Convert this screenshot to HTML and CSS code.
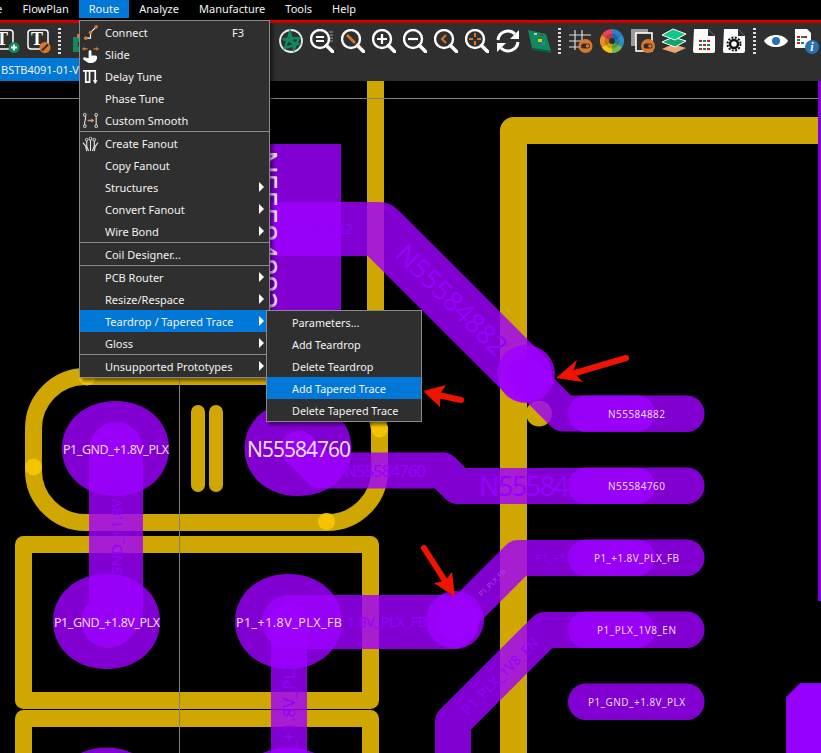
FILE: index.html
```html
<!DOCTYPE html>
<html lang="en">

<head>
    <meta charset="UTF-8">
    <title>Route menu</title>
    <link rel="stylesheet" href="styles.css">
</head>

<body>
    <div class="app">
        <div class="menubar">
            <span class="menubar-cut">e</span>
            <span class="menubar-item">FlowPlan</span>
            <span class="menubar-item active">Route</span>
            <span class="menubar-item">Analyze</span>
            <span class="menubar-item">Manufacture</span>
            <span class="menubar-item">Tools</span>
            <span class="menubar-item">Help</span>
        </div>
        <div class="accent"></div>

        <!-- toolbar -->
        <div class="toolbar">
            <span class="tool"><svg viewBox="0 0 24 24"><rect x="-5" y="1" width="22" height="19" rx="3" class="ic-box"/><text x="6" y="16" class="ic-t">T</text><circle cx="18" cy="18.500" r="5.500" fill="#0f8a5f"/><path d="M18 15.500v6M15 18.500h6" stroke="#fff" stroke-width="1.800"/></svg></span>
            <span class="tool"><svg viewBox="0 0 24 24"><rect x="1" y="1" width="20" height="19" rx="3" class="ic-box"/><text x="10" y="16" class="ic-t">T</text><circle cx="18" cy="18.500" r="5.500" fill="#d9782d"/><path d="M15 21.500l6-6" stroke="#3a2a1a" stroke-width="2"/></svg></span>
            <span class="tool-sep"></span>
            <span class="tool"><svg viewBox="0 0 24 24"><path d="M4 8h20v15H4z" fill="#0f8a5f"/><rect x="8" y="5" width="4" height="4" fill="#d9782d"/><rect x="9" y="13" width="5" height="5" fill="#2f2f2f"/></svg></span>
            <span class="tool-spacer"></span>
            <span class="tool"><svg viewBox="0 0 24 24"><circle cx="12" cy="12" r="11" fill="#2f2f2f" stroke="#e4f0ea" stroke-width="1.800"/><path d="M11 3L6 19l13-4L4 10l16-1-5 11z" fill="none" stroke="#0f8a5f" stroke-width="2.400"/></svg></span>
            <span class="tool"><svg viewBox="0 0 24 24"><use href="#lens"/><path d="M6 8h8M6 12h8" stroke="#fff" stroke-width="2"/><path d="M19 3h4M20 6h3M20 9h3M20 12h3" stroke="#999" stroke-width="1"/></svg></span>
            <span class="tool"><svg viewBox="0 0 24 24"><use href="#lens"/><path d="M6 6l8 8" stroke="#d9782d" stroke-width="2.600"/></svg></span>
            <span class="tool"><svg viewBox="0 0 24 24"><use href="#lens"/><path d="M5 10h10M10 5v10" stroke="#fff" stroke-width="2.200"/></svg></span>
            <span class="tool"><svg viewBox="0 0 24 24"><use href="#lens"/><path d="M5 10h10" stroke="#fff" stroke-width="2.200"/></svg></span>
            <span class="tool"><svg viewBox="0 0 24 24"><use href="#lens"/><path d="M12 6l-4 4 4 4" fill="none" stroke="#d9782d" stroke-width="2"/></svg></span>
            <span class="tool"><svg viewBox="0 0 24 24"><use href="#lens"/><path d="M4 10h4M12 10h4M10 4v4M10 12v4" stroke="#d9782d" stroke-width="2"/></svg></span>
            <span class="tool"><svg viewBox="0 0 24 24"><path d="M2 11a10 10 0 0 1 17-6" fill="none" stroke="#fff" stroke-width="3"/><path d="M23 1v9h-9z" fill="#fff"/><path d="M22 13a10 10 0 0 1-17 6" fill="none" stroke="#fff" stroke-width="3"/><path d="M1 23v-9h9z" fill="#fff"/></svg></span>
            <span class="tool"><svg viewBox="0 0 24 24"><path d="M1 1l18 4 5 17-19-3z" fill="#0f8a5f"/><path d="M5 19l19 3v2L5 21z" fill="#0a5f42"/><rect x="11" y="10" width="4" height="3" fill="#e8c020"/><rect x="15" y="13" width="3" height="3" fill="#2a7fc8"/><rect x="7" y="4" width="3" height="2" fill="#9fd8c0"/><rect x="13" y="5" width="3" height="2" fill="#7a4a20"/></svg></span>
            <span class="tool-sep"></span>
            <span class="tool"><svg viewBox="0 0 24 24"><path d="M6 1v20M13 1v14M0 6h22M0 12h12M0 18h10" stroke="#ddd" stroke-width="1.200"/><circle cx="16.500" cy="17" r="7" fill="#d9782d"/><rect x="12" y="14.500" width="9" height="5" rx="2.500" fill="#2f2f2f"/><circle cx="18.500" cy="17" r="1.800" fill="#d9782d"/></svg></span>
            <span class="tool"><svg viewBox="0 0 24 24"><path d="M12 12L1.600 6A12 12 0 0 1 12 0z" fill="#e8405a"/><path d="M12 12L12 0A12 12 0 0 1 22.400 6z" fill="#2a7fc8"/><path d="M12 12L22.400 6A12 12 0 0 1 22.400 18z" fill="#2a8fc8"/><path d="M12 12L22.400 18A12 12 0 0 1 12 24z" fill="#6fbb50"/><path d="M12 12L12 24A12 12 0 0 1 1.600 18z" fill="#f5c518"/><path d="M12 12L1.600 18A12 12 0 0 1 1.600 6z" fill="#f08a24"/><circle cx="12" cy="12" r="7.500" fill="#000" fill-opacity=".18"/><circle cx="12" cy="12" r="3" fill="#2f2f2f"/></svg></span>
            <span class="tool"><svg viewBox="0 0 24 24"><rect x="0" y="0" width="17" height="17" fill="#9a9a9a"/><rect x="5" y="4" width="16" height="18" fill="#2f2f2f" stroke="#fff" stroke-width="1.600"/><circle cx="17" cy="17" r="7" fill="#d9782d"/><rect x="12.500" y="14.500" width="9" height="5" rx="2.500" fill="#2f2f2f"/><circle cx="19" cy="17" r="1.800" fill="#d9782d"/></svg></span>
            <span class="tool"><svg viewBox="0 0 24 24"><path d="M0 20l11-5 13 4-11 5z" fill="#eaa877"/><path d="M0 13l11-5 13 4-11 6z" fill="#0ea36f" stroke="#fff" stroke-width="1"/><path d="M0 6l11-6 13 5-11 6z" fill="#10c88a" stroke="#fff" stroke-width="1"/></svg></span>
            <span class="tool tool-doc"><svg viewBox="0 0 24 24"><path d="M2 0h14l7 7v15a2 2 0 0 1-2 2H3a2 2 0 0 1-2-2z" fill="#fff"/><path d="M16 0v7h7" fill="#2f2f2f"/><path d="M7 11h3v2H7zM15 11h3v2h-3zM7 19h3v2H7zM15 19h3v2h-3z" fill="#d01818"/><path d="M11 11h3v2h-3zM7 15h3v2H7zM15 15h3v2h-3zM11 19h3v2h-3z" fill="#0f8a5f"/><path d="M11 15h3v2h-3z" fill="#d01818"/></svg></span>
            <span class="tool tool-doc"><svg viewBox="0 0 24 24"><path d="M2 0h14l7 7v15a2 2 0 0 1-2 2H3a2 2 0 0 1-2-2z" fill="#fff"/><path d="M16 0v7h7" fill="#2f2f2f"/><circle cx="12" cy="15" r="4" fill="none" stroke="#111" stroke-width="2.500"/><circle cx="12" cy="15" r="6.500" fill="none" stroke="#111" stroke-width="2" stroke-dasharray="2 1.400"/></svg></span>
            <span class="tool-sep"></span>
            <span class="tool"><svg viewBox="0 0 24 24"><path d="M0 12C5 4 19 4 24 12 19 20 5 20 0 12z" fill="#fff"/><circle cx="12" cy="12" r="4" fill="#2a6fb8"/></svg></span>
            <span class="tool"><svg viewBox="0 0 24 24"><path d="M0 0h12l4 4v15H0z" fill="#fff"/><path d="M2 7h3v2H2zM9 7h3v2H9zM2 13h3v2H2z" fill="#d01818"/><path d="M6 7h3v2H6zM2 10h3v2H2zM6 13h3v2H6z" fill="#0f8a5f"/><circle cx="17" cy="18" r="7" fill="#2a6fb8"/><text x="17" y="22" class="ic-i">i</text></svg></span>
        </div>

        <div class="tabs">
            <div class="tab">BSTB4091-01-V01</div>
        </div>

        <!-- board canvas, same coordinates as the window -->
        <svg class="board" viewBox="0 81 821 672">
            <defs>
                <path id="pad" d="M-53.500 0C-53.500-27-31-47.500 0-47.500S53.500-27 53.500 0 31 47.500 0 47.500-53.500 27-53.500 0z"/>
            </defs>
            <g class="copper">
                <path d="M375.500 81V410L379.500 429V470A52 52 0 0 1 327.500 522.500H85.500A52 52 0 0 1 33.500 470V428.500A52 52 0 0 1 85.500 376.500H379"/>
                <path d="M821 130.500H513.500V753"/>
                <rect x="23.500" y="544.500" width="347" height="156"/>
                <rect x="23.500" y="718.500" width="347" height="156"/>
            </g>
            <path class="bar" d="M198 412V485M216 412V485"/>
            <circle class="gold" cx="539" cy="413.500" r="13"/>
            <circle class="dot" cx="33.500" cy="467" r="8.500"/>
            <circle class="dot" cx="326.500" cy="521.500" r="8.500"/>
            <circle class="dot" cx="379.500" cy="429" r="8.500"/>
            <circle class="dot" cx="87" cy="377" r="8.500"/>

            <path class="ruler" d="M0 98.500H821M179.500 81V753"/>

            <!-- pads -->
            <g class="net">
                <rect x="200" y="144" width="141" height="226"/>
                <use href="#pad" x="115.500" y="448.500"/>
                <use href="#pad" x="298" y="448.500"/>
                <use href="#pad" x="106.500" y="621.500"/>
                <use href="#pad" x="288.500" y="621.500"/>
                <use href="#pad" x="106.500" y="795"/>
                <use href="#pad" x="288.500" y="795"/>
                <circle cx="526" cy="374" r="29"/>
                <circle cx="455" cy="620" r="29"/>
                <rect x="568" y="395.500" width="136.500" height="36.500" rx="18"/>
                <rect x="568" y="467.500" width="136.500" height="36.500" rx="18"/>
                <rect x="568" y="539.500" width="136.500" height="36.500" rx="18"/>
                <rect x="568" y="611.500" width="136.500" height="36.500" rx="18"/>
                <rect x="568" y="683.500" width="136.500" height="36.500" rx="18"/>
            </g>

            <!-- traces -->
            <g class="trace">
                <path d="M116 449V613L108.500 621" stroke-width="54"/>
                <path d="M230 229H379L525 375" stroke-width="54"/>
                <path d="M525 375L563.500 413.500H637" stroke-width="36"/>
                <path d="M299 449L320.500 470.500H442.500L458 486H637" stroke-width="36"/>
                <path d="M289 622H452" stroke-width="54"/>
                <path d="M455 621.500L518.500 558H637" stroke-width="36"/>
                <path d="M289 622V753" stroke-width="36"/>
                <path d="M637 630H545L453 722V770" stroke-width="36"/>
            </g>
            <path class="edge-line" d="M819.500 81V601"/>
            <path class="edge-pad" d="M786.500 754V697L800 683.500H822V754z"/>

            <!-- net names on traces -->
            <g class="net-name">
                <text x="344" y="477" font-size="17" textLength="82">N55584760</text>
                <text x="479" y="496" font-size="27" textLength="90">N55584</text>
                <text x="347" y="627" font-size="14.500" textLength="80">1.8V_PLX_FB</text>
                <text x="535" y="562" font-size="11">P1_+1.8V</text>
                <text x="275" y="234" font-size="15" textLength="78">N55584882</text>
                <text transform="translate(451 300) rotate(45)" y="9" text-anchor="middle" font-size="27">N55584882</text>
                <text transform="translate(122 534) rotate(-90)" text-anchor="middle" font-size="15">P1_GND_+1.8V_PLX</text>
                <text transform="translate(295 715) rotate(-90)" text-anchor="middle" font-size="17">P1_+1.8V_PLX</text>
                <text transform="translate(500 676) rotate(-45)" y="5" text-anchor="middle" font-size="14">P1_PLX_1V8_EN</text>
            </g>
            <text class="net-small" transform="translate(492.500 583) rotate(-45)" y="2" text-anchor="middle" font-size="7">P1_PLX_FB</text>

            <!-- pad names -->
            <g class="pad-name">
                <text transform="translate(253 150) rotate(90)" font-size="32" textLength="160">N55584882</text>
                <text x="63" y="454" font-size="12.500" textLength="106">P1_GND_+1.8V_PLX</text>
                <text x="247" y="457" font-size="21" textLength="104">N55584760</text>
                <text x="54" y="627" font-size="12.500" textLength="106">P1_GND_+1.8V_PLX</text>
                <text x="236" y="627" font-size="12.500" textLength="106">P1_+1.8V_PLX_FB</text>
                <text x="608" y="418" font-size="10" textLength="57">N55584882</text>
                <text x="608" y="490" font-size="10" textLength="57">N55584760</text>
                <text x="594" y="562" font-size="10" textLength="85">P1_+1.8V_PLX_FB</text>
                <text x="597" y="634" font-size="10" textLength="79">P1_PLX_1V8_EN</text>
                <text x="588" y="706" font-size="10" textLength="97">P1_GND_+1.8V_PLX</text>
            </g>

            <!-- annotation arrows -->
            <g class="arrow">
                <path class="shaft" d="M626 358L575 373"/>
                <path d="M556 378L577 360L573 372L583 382z"/>
                <path class="shaft" d="M461 400L438 395"/>
                <path d="M423 391L446 385L440 394L440 407z"/>
                <path class="shaft" d="M424 548L447 584"/>
                <path d="M455 597L434 583L445 581L452 572z"/>
            </g>
        </svg>

        <!-- route menu -->
        <div class="menu route-menu">
            <div class="menu-item"><span class="menu-icon"><svg viewBox="0 0 18 18"><path d="M4 15h5V9l6-6" fill="none" stroke="#fff" stroke-width="1.200"/><circle cx="4" cy="15" r="1.900" fill="#d9782d"/><circle cx="9" cy="9" r="1.900" fill="#d9782d"/><circle cx="15" cy="3" r="1.900" fill="#d9782d"/></svg></span><span class="menu-label">Connect</span><span class="menu-key">F3</span></div>
            <div class="menu-item"><span class="menu-icon"><svg viewBox="0 0 18 18"><path d="M7 6a1.500 1.500 0 0 1 3 0v4h4a2 2 0 0 1 2 2c0 3-2 6-6 6H7l-6-4 1-2 5 1z" fill="#fff"/><path d="M1 3h5M12 3h5" stroke="#d9782d" stroke-width="1.400"/><path d="M0 3l3-2v4zM18 3l-3-2v4z" fill="#d9782d"/></svg></span><span class="menu-label">Slide</span></div>
            <div class="menu-item"><span class="menu-icon"><svg viewBox="0 0 18 18"><path d="M1 3h7v12h-4V3M8 3h6v11" fill="none" stroke="#fff" stroke-width="1.800"/><path d="M11.500 13h5L14 17z" fill="#fff"/></svg></span><span class="menu-label">Delay Tune</span></div>
            <div class="menu-item"><span class="menu-icon"></span><span class="menu-label">Phase Tune</span></div>
            <div class="menu-item"><span class="menu-icon"><svg viewBox="0 0 18 18"><path d="M3 4C6 7 1 10 3 14M15 4v10" fill="none" stroke="#ddd" stroke-width="1.200"/><circle cx="3" cy="3" r="1.500" fill="none" stroke="#ddd"/><circle cx="3" cy="15" r="1.500" fill="none" stroke="#ddd"/><circle cx="15" cy="3" r="1.500" fill="none" stroke="#ddd"/><circle cx="15" cy="15" r="1.500" fill="none" stroke="#ddd"/><path d="M6 9h6" stroke="#d9a060" stroke-width="1.600"/><path d="M13 9l-3-2v4z" fill="#d9a060"/></svg></span><span class="menu-label">Custom Smooth</span></div>
            <div class="menu-line"></div>
            <div class="menu-item"><span class="menu-icon"><svg viewBox="0 0 18 18"><path d="M9 5v12M5 6v6l2 5M13 6v6l-2 5M1 8l3 4 1 5M17 8l-3 4-1 5" fill="none" stroke="#ddd" stroke-width="1.200"/><circle cx="9" cy="4" r="1.600" fill="none" stroke="#ddd"/><circle cx="5" cy="5" r="1.400" fill="none" stroke="#ddd"/><circle cx="13" cy="5" r="1.400" fill="none" stroke="#ddd"/></svg></span><span class="menu-label">Create Fanout</span></div>
            <div class="menu-item"><span class="menu-icon"></span><span class="menu-label">Copy Fanout</span></div>
            <div class="menu-item has-sub"><span class="menu-icon"></span><span class="menu-label">Structures</span></div>
            <div class="menu-item has-sub"><span class="menu-icon"></span><span class="menu-label">Convert Fanout</span></div>
            <div class="menu-item has-sub"><span class="menu-icon"></span><span class="menu-label">Wire Bond</span></div>
            <div class="menu-line"></div>
            <div class="menu-item"><span class="menu-icon"></span><span class="menu-label">Coil Designer...</span></div>
            <div class="menu-line"></div>
            <div class="menu-item has-sub"><span class="menu-icon"></span><span class="menu-label">PCB Router</span></div>
            <div class="menu-item has-sub"><span class="menu-icon"></span><span class="menu-label">Resize/Respace</span></div>
            <div class="menu-item has-sub active"><span class="menu-icon"></span><span class="menu-label">Teardrop / Tapered Trace</span></div>
            <div class="menu-item has-sub"><span class="menu-icon"></span><span class="menu-label">Gloss</span></div>
            <div class="menu-line"></div>
            <div class="menu-item has-sub"><span class="menu-icon"></span><span class="menu-label">Unsupported Prototypes</span></div>
        </div>

        <!-- teardrop submenu -->
        <div class="menu sub-menu">
            <div class="menu-item"><span class="menu-icon"></span><span class="menu-label">Parameters...</span></div>
            <div class="menu-item"><span class="menu-icon"></span><span class="menu-label">Add Teardrop</span></div>
            <div class="menu-item"><span class="menu-icon"></span><span class="menu-label">Delete Teardrop</span></div>
            <div class="menu-item active"><span class="menu-icon"></span><span class="menu-label">Add Tapered Trace</span></div>
            <div class="menu-item"><span class="menu-icon"></span><span class="menu-label">Delete Tapered Trace</span></div>
        </div>

        <svg class="defs" width="0" height="0">
            <symbol id="lens" viewBox="0 0 24 24">
                <circle cx="10" cy="10" r="9" fill="none" stroke="#fff" stroke-width="2.400"/>
                <path d="M16.500 16.500L23 23" stroke="#fff" stroke-width="3.500" stroke-linecap="round"/>
            </symbol>
        </svg>
    </div>
</body>

</html>
```

FILE: styles.css
```css
* {
    margin: 0;
    padding: 0;
    box-sizing: border-box;
}

body {
    background: #000;
    font-family: "Noto Sans", "Open Sans", sans-serif;
    color: #f2f2f2;
    overflow: hidden;
}

.app {
    position: relative;
    width: 821px;
    height: 753px;
    overflow: hidden;
    background: #000;
}

/* menu bar */
.menubar {
    display: flex;
    height: 20px;
    font-size: 11px;
    line-height: 18px;
    overflow: hidden;
}

.menubar-cut {
    width: 12.600px;
    text-indent: -4px;
    overflow: hidden;
}

.menubar-item {
    height: 18px;
    padding: 0 10px;
}

.menubar-item.active {
    background: #0078d7;
}

.accent {
    height: 3px;
    background: #d00000;
}

/* toolbar */
.toolbar {
    display: flex;
    align-items: center;
    height: 35px;
    margin-left: -8px;
    background: #2f2f2f;
}

.tool {
    display: flex;
    justify-content: center;
    flex: none;
    width: 31px;
}

.tool-doc {
    width: 30px;
}

.tool svg {
    width: 24px;
    height: 24px;
    overflow: visible;
}

.tool-sep {
    flex: none;
    width: 3px;
    height: 26px;
    margin: 0 4px;
    background: repeating-linear-gradient(#ddd 0 2px, transparent 2px 4px);
}

.tool-spacer {
    flex: none;
    width: 179px;
}

.ic-box {
    fill: none;
    stroke: #fff;
    stroke-width: 1.500;
}

.ic-t {
    font-family: "Liberation Serif", serif;
    font-size: 18px;
    font-weight: bold;
    text-anchor: middle;
    fill: #fff;
}

.ic-i {
    font-family: "Liberation Serif", serif;
    font-size: 12px;
    font-style: italic;
    font-weight: bold;
    text-anchor: middle;
    fill: #fff;
}

.tabs {
    height: 23px;
    background: #2f2f2f;
}

.tab {
    width: 90px;
    height: 23px;
    padding-left: 1px;
    background: #0078d7;
    font-size: 11px;
    line-height: 24px;
    white-space: nowrap;
    overflow: hidden;
}

/* board */
.board {
    display: block;
    width: 821px;
    height: 672px;
    background: #000;
}

.copper path,
.copper rect {
    fill: none;
    stroke: #cfa700;
    stroke-width: 17;
    stroke-linejoin: round;
}

.copper path:nth-child(2) {
    stroke-width: 27;
}

.bar {
    fill: none;
    stroke: #cfa700;
    stroke-width: 14;
    stroke-linecap: round;
}

.gold {
    fill: #cfa700;
}

.dot {
    fill: #f5c400;
}

.ruler {
    fill: none;
    stroke: #808080;
    stroke-width: 1;
}

.net {
    fill: #9e00ff;
    fill-opacity: .82;
}

.trace {
    fill: none;
    stroke: #9e00ff;
    stroke-opacity: .82;
    stroke-linecap: round;
    stroke-linejoin: round;
}

.edge-line {
    fill: none;
    stroke: #8000d8;
    stroke-width: 3;
}

.edge-pad {
    fill: #9500ff;
    stroke: #8000d8;
}

.net-name {
    fill: #9500ff;
}

.net-small {
    fill: #b040e8;
}

.pad-name {
    fill: #eadcff;
}

.arrow path {
    fill: #f01400;
}

.arrow .shaft {
    fill: none;
    stroke: #f01400;
    stroke-width: 6;
    stroke-linecap: round;
}

/* menus */
.menu {
    position: absolute;
    background: #2f2f2f;
    border: 1px solid #8a8a8a;
    box-shadow: 3px 3px 3px rgba(0, 0, 0, .45);
    font-size: 11px;
}

.route-menu {
    top: 20px;
    left: 79px;
    width: 191px;
}

.sub-menu {
    top: 310px;
    left: 266px;
    width: 156px;
    font-size: 10.800px;
}

.menu-item {
    position: relative;
    display: flex;
    align-items: center;
    height: 22px;
}

.menu-item.active {
    background: #0078d7;
}

.menu-icon {
    display: flex;
    align-items: center;
    flex: none;
    width: 25px;
    padding-left: 2px;
}

.menu-icon svg {
    width: 17px;
    height: 17px;
}

.menu-key {
    position: absolute;
    left: 152px;
}

.menu-line {
    height: 1px;
    background: #8a8a8a;
}

.has-sub::after {
    content: "";
    position: absolute;
    top: 6px;
    left: 179px;
    border-top: 5px solid transparent;
    border-bottom: 5px solid transparent;
    border-left: 5px solid #fff;
}

.defs {
    position: absolute;
}
```
